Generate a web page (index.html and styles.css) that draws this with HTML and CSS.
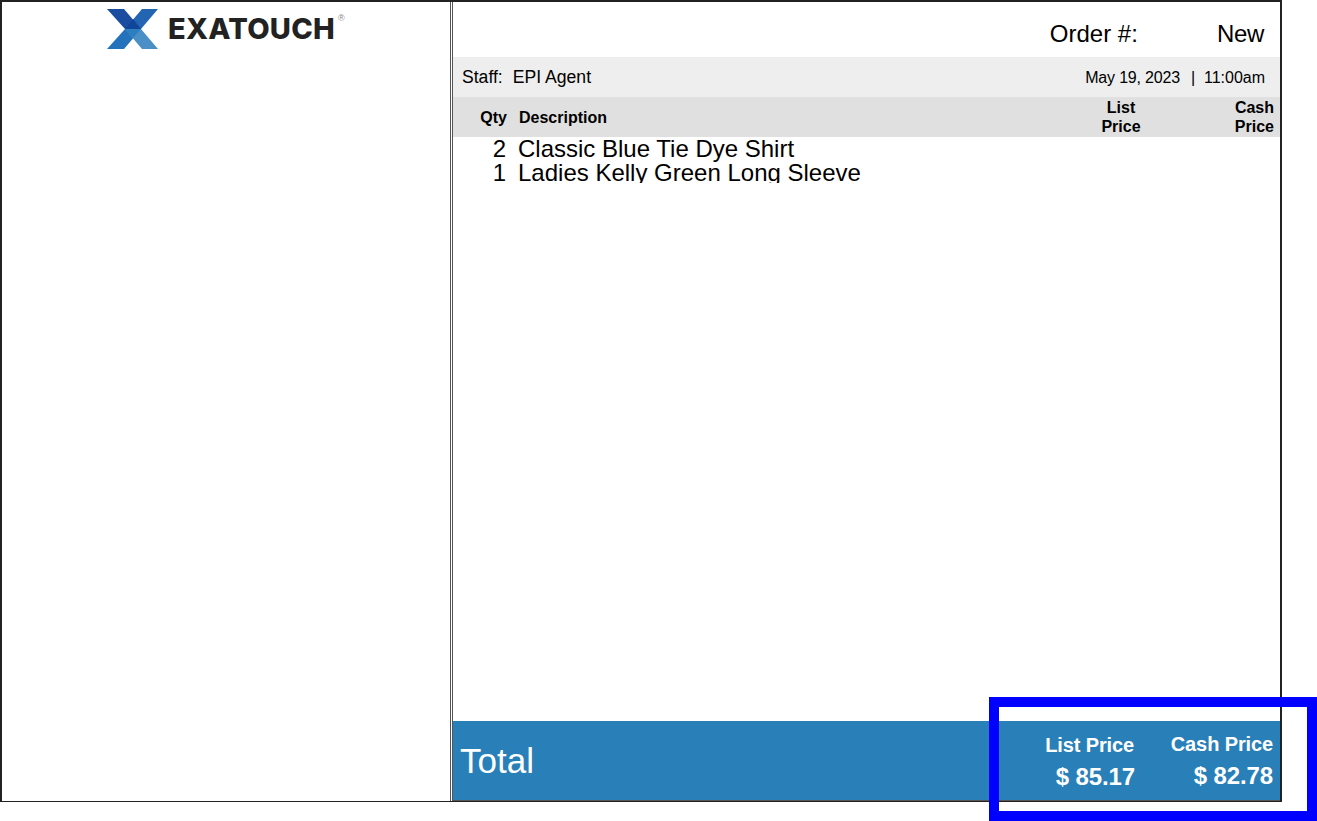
FILE: index.html
```html
<!DOCTYPE html>
<html lang="en">

<head>
  <meta charset="UTF-8">
  <title>Customer Display</title>
  <link rel="stylesheet" href="styles.css">
</head>

<body>
  <div class="screen">
    <div class="brand-pane">
      <div class="logo">
        <svg class="logo-mark" width="52" height="40" viewBox="0 0 52 40">
          <polygon fill="#1a4d9f" points="0,0 17,0 34,20 18,20"></polygon>
          <polygon fill="#2365b2" points="51,0 35,0 18,20 34,20"></polygon>
          <polygon fill="#2472bb" points="0,40 17,40 34,20 18,20"></polygon>
          <polygon fill="#4a90c6" points="51,40 35,40 18,20 34,20"></polygon>
          <polygon fill="#11459a" points="26,10 34,20 18,20"></polygon>
          <polygon fill="#2e7fc0" points="26,29 34,20 18,20"></polygon>
        </svg>
        <span class="logo-text">EXATOUCH</span><span class="logo-reg">®</span>
      </div>
    </div>

    <div class="order-pane">
      <div class="order-head">
        <span class="order-label">Order #:</span>
        <span class="order-num">New</span>
      </div>
      <div class="staff-bar">
        <span class="staff"><span class="staff-label">Staff:</span>EPI Agent</span>
        <span class="stamp"><span class="stamp-date">May 19, 2023</span> &nbsp;|&nbsp; 11:00am</span>
      </div>
      <div class="col-head">
        <div class="col-qty">Qty</div>
        <div class="col-desc">Description</div>
        <div class="col-list">List<br>Price</div>
        <div class="col-cash">Cash<br>Price</div>
      </div>
      <ul class="items">
        <li class="item"><span class="item-qty">2</span><span class="item-name">Classic Blue Tie Dye Shirt</span></li>
        <li class="item"><span class="item-qty">1</span><span class="item-name">Ladies Kelly Green Long Sleeve</span></li>
      </ul>
      <div class="total-bar">
        <div class="total-label">Total</div>
        <div class="total-col total-list">
          <div class="total-name">List Price</div>
          <div class="total-amt">$ 85.17</div>
        </div>
        <div class="total-col total-cash">
          <div class="total-name">Cash Price</div>
          <div class="total-amt">$ 82.78</div>
        </div>
      </div>
    </div>
  </div>

  <div class="highlight"></div>
</body>

</html>
```

FILE: styles.css
```css
* {
  box-sizing: border-box;
}

body {
  margin: 0;
  height: 821px;
  overflow: hidden;
  background-color: #fff;
  color: #000;
  font-family: "Liberation Sans", Arial, sans-serif;
}

.screen {
  display: flex;
  width: 1282px;
  height: 802px;
  border: 1px solid #222;
  border-width: 2px 2px 1px 2px;
}

.brand-pane {
  width: 449px;
  border-right: 1px solid #555;
}

.logo {
  display: flex;
  align-items: flex-start;
  padding: 7px 0 0 105px;
}

.logo-text {
  margin-left: 9px;
  padding-top: 4px;
  font-family: Inter, sans-serif;
  font-size: 29px;
  line-height: 32px;
  font-weight: 800;
  letter-spacing: 0.25px;
  color: #222;
}

.logo-reg {
  margin-left: 3px;
  padding-top: 4px;
  font-size: 9px;
  color: #888;
}

.order-pane {
  flex: 1;
  display: flex;
  flex-direction: column;
  border-left: 1px solid #555;
  border-bottom: 1px solid #555;
  margin-left: 1px;
}

.order-head {
  display: flex;
  justify-content: flex-end;
  height: 55px;
  padding: 18px 16px 0 0;
  font-size: 24px;
  line-height: 28px;
}

.order-label {
  margin-right: 79px;
}

.order-num {
  letter-spacing: -0.3px;
}

.staff-bar {
  display: flex;
  justify-content: space-between;
  align-items: center;
  height: 40px;
  padding: 2px 15px 0 9px;
  background-color: #eeeeee;
  font-size: 16px;
}

.staff {
  margin-bottom: 1px;
  font-size: 17.6px;
}

.staff-label {
  margin-right: 10px;
}

.stamp-date {
  margin-right: 2px;
  letter-spacing: -0.18px;
}

.col-head {
  display: flex;
  height: 40px;
  padding-top: 1px;
  background-color: #e0e0e0;
  font-size: 16px;
  font-weight: bold;
  line-height: 19px;
}

.col-qty {
  width: 54px;
  align-self: center;
  text-align: right;
}

.col-desc {
  flex: 1;
  align-self: center;
  margin-left: 12px;
}

.col-list {
  width: 60px;
  text-align: center;
  margin-right: 49px;
}

.col-cash {
  width: 80px;
  padding-right: 6px;
  text-align: right;
}

/* list box cuts the last row's descenders, same as the real display */
.items {
  height: 46px;
  list-style: none;
  margin: 0;
  padding: 0;
  overflow: hidden;
  font-size: 24px;
}

.item {
  display: flex;
  height: 24px;
  line-height: 24px;
}

.item-qty {
  width: 53px;
  text-align: right;
}

.item-name {
  margin-left: 12px;
}

.total-bar {
  display: flex;
  height: 79px;
  margin-top: auto;
  background-color: #2980b9;
  color: #fff;
}

.total-label {
  flex: 1;
  padding: 20px 0 0 7px;
  font-size: 35px;
  line-height: 40px;
}

.total-col {
  text-align: right;
}

.total-list {
  width: 140px;
  margin-right: 5px;
  padding-top: 12px;
}

.total-list .total-name {
  margin-right: 1px;
}

.total-cash {
  width: 140px;
  padding-top: 11px;
  padding-right: 7px;
}

.total-name {
  font-size: 20px;
  line-height: 24px;
  font-weight: bold;
  letter-spacing: -0.12px;
}

.total-amt {
  margin-top: 6px;
  font-size: 24px;
  line-height: 28px;
  font-weight: bold;
  letter-spacing: -0.1px;
}

/* annotation box drawn over the totals */
.highlight {
  position: absolute;
  left: 989px;
  top: 697px;
  width: 328px;
  height: 124px;
  border: 10px solid #0000ff;
}
```
